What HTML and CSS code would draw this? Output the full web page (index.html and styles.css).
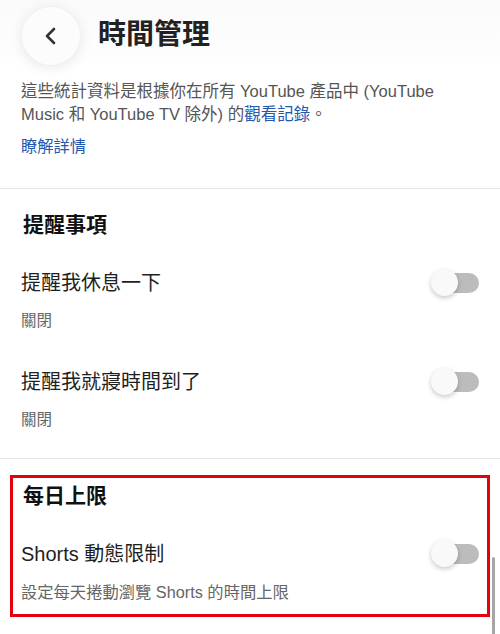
FILE: index.html
```html
<!DOCTYPE html>
<html lang="zh-Hant">
<head>
<meta charset="utf-8">
<title>時間管理</title>
<link rel="stylesheet" href="styles.css">
</head>
<body>
<div class="page">
  <header class="header">
    <div class="back">
      <svg width="20" height="20" viewBox="0 0 20 20"><path d="M13 3 L6 10 L13 17" fill="none" stroke="#333" stroke-width="2.6" stroke-linecap="round" stroke-linejoin="round"/></svg>
    </div>
    <h1 class="title">時間管理</h1>
  </header>
  <p class="desc">這些統計資料是根據你在所有 YouTube 產品中 (YouTube Music 和 YouTube TV 除外) 的<span class="link">觀看記錄</span>。</p>
  <p class="learn">瞭解詳情</p>
  <div class="divider"></div>
  <section class="section">
    <h2 class="heading">提醒事項</h2>
    <div class="item first">
      <div class="row">
        <span class="label">提醒我休息一下</span>
        <span class="toggle"><span class="knob"></span></span>
      </div>
      <div class="sub">關閉</div>
    </div>
    <div class="item second">
      <div class="row">
        <span class="label">提醒我就寢時間到了</span>
        <span class="toggle"><span class="knob"></span></span>
      </div>
      <div class="sub">關閉</div>
    </div>
  </section>
  <div class="divider d2"></div>
  <section class="box">
    <h2 class="heading">每日上限</h2>
    <div class="item first">
      <div class="row">
        <span class="label">Shorts 動態限制</span>
        <span class="toggle"><span class="knob"></span></span>
      </div>
      <div class="sub wide">設定每天捲動瀏覽 Shorts 的時間上限</div>
    </div>
  </section>
  <div class="scrollbar"></div>
</div>
</body>
</html>
```
FILE: styles.css
```css
* { box-sizing: border-box; }
html, body { margin: 0; padding: 0; background: #fff; }
body {
  font-family: "Liberation Sans", "Noto Sans CJK TC", sans-serif;
  color: #1f1f1f;
  width: 500px;
  height: 634px;
  overflow: hidden;
}
.page { position: relative; height: 634px; }
.header {
  height: 70px;
  display: flex;
  align-items: center;
  padding-left: 22px;
  background: linear-gradient(180deg, #fafafa 0%, #fdfdfd 70%, #fff 100%);
}
.back {
  width: 58px;
  height: 58px;
  border-radius: 50%;
  background: #fcfcfc;
  box-shadow: 0 2px 14px rgba(0,0,0,0.10);
  display: flex;
  align-items: center;
  justify-content: center;
  margin-top: 1px;
}
.title {
  margin: 0 0 0 18px;
  font-size: 28px;
  font-weight: 700;
  color: #222;
  line-height: 36px;
}
.desc {
  margin: 10px 0 0;
  padding: 0 40px 0 21px;
  font-size: 16.5px;
  line-height: 22.5px;
  color: #555;
}
.link { color: #2458b0; }
.learn {
  margin: 10px 0 0;
  padding: 0 21px;
  font-size: 16.3px;
  line-height: 22px;
  color: #2458b0;
}
.divider {
  margin-top: 31px;
  height: 1px;
  background: #e4e4e4;
}
.d2 { margin-top: 28px; }
.section { padding: 22px 21px 0; }
.heading {
  margin: 0;
  padding-left: 2px;
  font-size: 21px;
  font-weight: 700;
  line-height: 28px;
  color: #111;
}
.item.first { padding-top: 30px; }
.item.second { padding-top: 37px; }
.row {
  display: flex;
  align-items: center;
  justify-content: space-between;
  height: 28px;
}
.label { font-size: 20px; line-height: 28px; color: #1f1f1f; }
.sub {
  margin-top: 14px;
  font-size: 15.5px;
  line-height: 20px;
  color: #666;
}
.sub.wide { font-size: 16.3px; }
.toggle {
  position: relative;
  width: 47px;
  height: 20px;
  border-radius: 10px;
  background: #bcbcbc;
}
.knob {
  position: absolute;
  left: -1px;
  top: -4px;
  width: 27px;
  height: 27px;
  border-radius: 50%;
  background: #f9f9f9;
  box-shadow: 0 2px 5px rgba(0,0,0,0.22);
}
.box {
  margin: 16px 10px 0;
  border: 3px solid #e3000f;
  padding: 4px 8px 12px 8px;
}
.scrollbar {
  position: absolute;
  left: 492px;
  top: 557px;
  width: 3px;
  height: 90px;
  border-radius: 2px;
  background: #a6a6a6;
}
```
